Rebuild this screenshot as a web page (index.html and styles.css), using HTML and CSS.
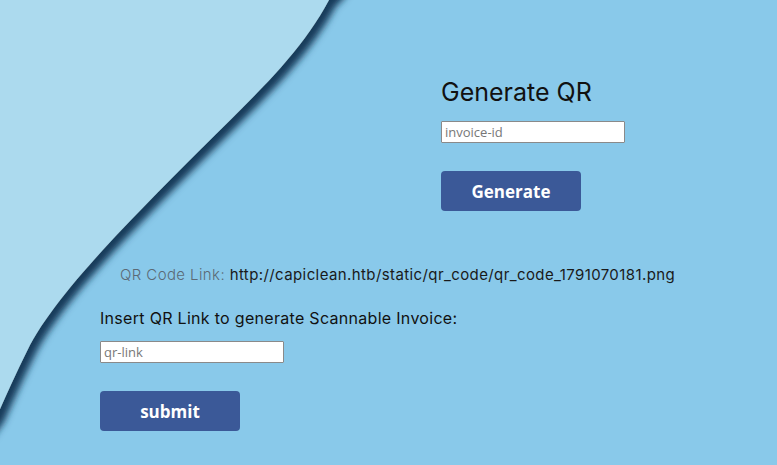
FILE: index.html
```html
<!DOCTYPE html>
<html>
<head>
<meta charset="utf-8">
<title>Generate QR</title>
<link rel="stylesheet" href="styles.css">
</head>
<body>
<svg class="wave" width="380" height="465" viewBox="0 0 380 465">
  <defs>
    <filter id="sh" x="-20%" y="-20%" width="140%" height="140%">
      <feDropShadow dx="7" dy="6" stdDeviation="3.5" flood-color="#143a5a" flood-opacity="1"/>
    </filter>
  </defs>
  <path d="M -20 -20 L 345 -20 C 338 -8, 334 -4, 329 0 C 300 55, 250 100, 200 150 C 130 220, 60 290, 30 345 C 15 375, 5 398, -3 416 L -20 440 Z" fill="#acdaee" filter="url(#sh)"/>
</svg>
<main class="page">
  <section class="gen">
    <h2 class="title">Generate QR</h2>
    <input class="field" type="text" placeholder="invoice-id">
    <button class="btn">Generate</button>
  </section>
  <section class="scan">
    <p class="link"><span class="label">QR Code Link:</span> http://capiclean.htb/static/qr_code/qr_code_1791070181.png</p>
    <p class="insert">Insert QR Link to generate Scannable Invoice:</p>
    <input class="field" type="text" placeholder="qr-link">
    <button class="btn">submit</button>
  </section>
</main>
</body>
</html>
```
FILE: styles.css
```css
html, body {
  margin: 0;
  padding: 0;
}
body {
  background: #89c9ea;
  width: 777px;
  height: 465px;
  overflow: hidden;
  position: relative;
  font-family: "Inter", "Open Sans", sans-serif;
}
.wave {
  position: absolute;
  left: 0;
  top: 0;
  z-index: 0;
}
.page {
  position: relative;
  z-index: 1;
  display: flex;
  flex-direction: column;
}
.gen {
  display: flex;
  flex-direction: column;
  align-items: flex-start;
  padding: 77px 0 0 441px;
}
.title {
  margin: 0;
  font-size: 25px;
  line-height: 30px;
  font-weight: 400;
  color: #111;
}
.field {
  box-sizing: border-box;
  width: 184px;
  height: 22px;
  margin: 0;
  padding: 0 3px;
  border: 1px solid #8a8a8a;
  border-radius: 1px;
  background: #fff;
  font-family: "Open Sans", sans-serif;
  font-size: 13px;
  color: #333;
}
.field::placeholder {
  color: #777;
}
.gen .field {
  margin-top: 14px;
}
.btn {
  box-sizing: border-box;
  width: 140px;
  height: 40px;
  margin: 28px 0 0 0;
  border: none;
  border-radius: 4px;
  background: #3b5998;
  color: #fff;
  font-family: "Open Sans", sans-serif;
  font-weight: 700;
  font-size: 17px;
  cursor: pointer;
}
.scan {
  display: flex;
  flex-direction: column;
  align-items: flex-start;
  padding: 54px 0 0 100px;
}
.link {
  margin: 0 0 0 20px;
  font-size: 15px;
  line-height: 20px;
  letter-spacing: 0.4px;
  color: #1a1a1a;
}
.label {
  color: #5b6a76;
  font-weight: 300;
}
.insert {
  margin: 23px 0 0 0;
  font-size: 16px;
  line-height: 20px;
  letter-spacing: 0.3px;
  color: #111;
}
.scan .field {
  margin-top: 13px;
}
.scan .btn {
  margin-top: 28px;
}
```
